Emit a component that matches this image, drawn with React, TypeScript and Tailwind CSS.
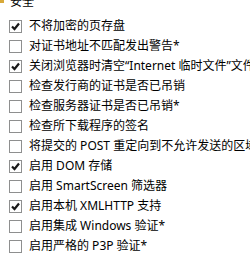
const items: { label: string; checked: boolean }[] = [
  { label: '不将加密的页存盘', checked: true },
  { label: '对证书地址不匹配发出警告*', checked: false },
  { label: '关闭浏览器时清空“Internet 临时文件”文件夹', checked: true },
  { label: '检查发行商的证书是否已吊销', checked: false },
  { label: '检查服务器证书是否已吊销*', checked: false },
  { label: '检查所下载程序的签名', checked: false },
  { label: '将提交的 POST 重定向到不允许发送的区域时发出警告', checked: false },
  { label: '启用 DOM 存储', checked: true },
  { label: '启用 SmartScreen 筛选器', checked: false },
  { label: '启用本机 XMLHTTP 支持', checked: true },
  { label: '启用集成 Windows 验证*', checked: false },
  { label: '启用严格的 P3P 验证*', checked: false },
];

function Check({ checked }: { checked: boolean }) {
  return (
    <div className="w-[13px] h-[13px] border border-[#8e8f8f] bg-white flex items-center justify-center shrink-0">
      {checked && (
        <svg width="9" height="9" viewBox="0 0 9 9">
          <path d="M1 4.5 L3.5 7 L8 1.5" fill="none" stroke="#1a1a1a" strokeWidth="2.2" />
        </svg>
      )}
    </div>
  );
}

export default function App() {
  return (
    <div className="w-[250px] h-[257px] bg-white overflow-hidden text-[12px] text-black font-['Noto_Sans','Noto_Sans_CJK_SC',sans-serif]">
      {/* Section header, cut at the top edge */}
      <div className="flex items-start h-[16px]">
        <div className="w-[4px] h-[3px] bg-[#d8a93a]" />
        <span className="ml-[6px] leading-[12px] mt-[-4px]">安全</span>
      </div>
      {items.map((it) => (
        <div key={it.label} className="flex items-center h-[20px] pl-[9px] whitespace-nowrap">
          <Check checked={it.checked} />
          <span className="ml-[7px] leading-none">{it.label}</span>
        </div>
      ))}
    </div>
  );
}
